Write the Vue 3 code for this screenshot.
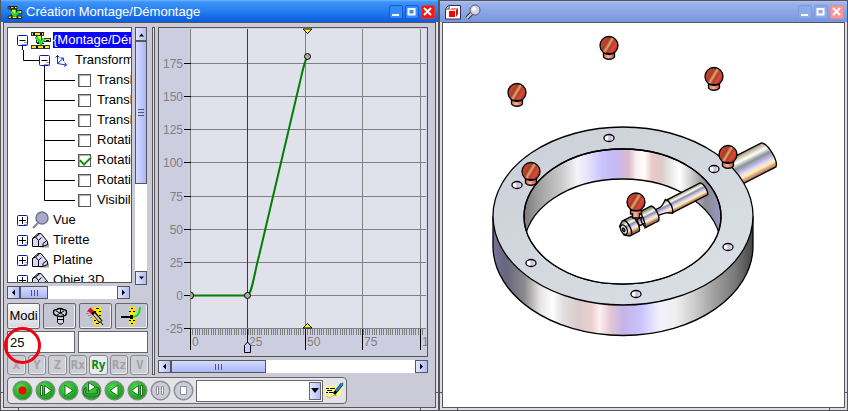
<script setup>
import { ref } from 'vue'

const transforms = ref([
  { label: 'Translation X', on: false },
  { label: 'Translation Y', on: false },
  { label: 'Translation Z', on: false },
  { label: 'Rotation X', on: false },
  { label: 'Rotation Y', on: true },
  { label: 'Rotation Z', on: false },
  { label: 'Visibilité', on: false }
])
const parts = ['Tirette', 'Platine', 'Objet 3D']
const axes = ['X', 'Y', 'Z', 'Rx', 'Ry', 'Rz', 'V']
const frame = ref('25')
const value = ref('')
const choice = ref('')

const levels = [
  { t: '175', y: 63 }, { t: '150', y: 96 }, { t: '125', y: 129 }, { t: '100', y: 162 },
  { t: '75', y: 196 }, { t: '50', y: 229 }, { t: '25', y: 262 }, { t: '0', y: 295 }, { t: '-25', y: 328 }
]
const times = [{ t: '0', x: 190 }, { t: '25', x: 247 }, { t: '50', x: 305 }, { t: '75', x: 362 }, { t: '100', x: 420 }]
let ruler = ''
for (let i = 0; i <= 101; i++) ruler += `M${Math.round(190 + i * 2.3) + 0.5} 328v7`

const controls = [
  { name: 'Enregistrer', kind: 'rec' },
  { name: 'Pas suivant', kind: 'step' },
  { name: 'Lecture', kind: 'play' },
  { name: 'Boucle', kind: 'loop' },
  { name: 'Lecture arrière', kind: 'back' },
  { name: 'Pas précédent', kind: 'stepback' },
  { name: 'Pause', kind: 'pause' },
  { name: 'Stop', kind: 'stop' }
]
const screws = [[609, 45], [517, 92], [714, 76], [728, 154], [531, 171]]
const holes = [[609, 138], [714, 169], [728, 247], [636, 294], [531, 263], [517, 185]]
</script>

<template>
  <main class="desk">
    <section class="win active">
      <header class="bar">
        <svg class="logo" width="16" height="15" viewBox="0 0 20 18">
          <path d="M1.500 1.500h11v3h-11zM5.500 4.500h6v9h-6z" fill="#f0e830" stroke="#000" />
          <path d="M12.500 6.500h6v4h-6zM1.500 13.500h17v3h-17z" fill="#f0e830" stroke="#000" />
          <path d="M4 2v2M9 2v2M6 14v2M13 14v2" stroke="#000" stroke-width="2" />
          <path d="M5 8l5 5 5-6" fill="none" stroke="#1be02a" stroke-width="3" />
        </svg>
        <h1>Création Montage/Démontage</h1>
        <button class="wb" aria-label="Réduire"><svg width="13" height="13"><path d="M3 9h7v2H3z" fill="#fff" /></svg></button>
        <button class="wb" aria-label="Agrandir"><svg width="13" height="13"><path d="M3.500 4H9.500V9.500H3.500z" fill="none" stroke="#fff" stroke-width="2" /></svg></button>
        <button class="wb close" aria-label="Fermer"><svg width="13" height="13"><path d="M3 3l7 7M10 3l-7 7" stroke="#fff" stroke-width="2" /></svg></button>
      </header>
      <div class="body">
        <div class="upper">
          <div class="left">
            <div class="treegrid">
              <div class="tree">
                <div class="row">
                  <svg class="tg" width="11" height="20"><path d="M5.500 16v4" stroke="#000" /><rect x=".5" y="5.500" width="10" height="10" rx="1" fill="#fff" stroke="#0a1aa0" /><path d="M2.500 10.500h6" stroke="#000" /><path d="M5 14.500h5M7 12.500h3" stroke="#8f98dc" /></svg>
                  <svg class="ric" width="20" height="18" viewBox="0 0 20 18" shape-rendering="crispEdges">
                    <path d="M.5 1.500h12v3H.5zM5.500 4.500h5v7h-5z" fill="#f0e830" stroke="#333" />
                    <path d="M13.500 7.500h6v3h-6zM.5 14.500h18v3H.5z" fill="#f0e830" stroke="#333" />
                    <path d="M3 2v2M10 2v2M6 15v2M13 15v2" stroke="#000" stroke-width="2" />
                    <path d="M11 1h2M6 12h7M15 9h3" stroke="#000" />
                    <path d="M5 6l5 6 3-4" fill="none" stroke="#1be02a" stroke-width="3" />
                  </svg>
                  <span class="sel">{Montage/Démontage}</span>
                </div>
                <div class="row lvl1">
                  <svg width="17" height="20"><path d="M1.500 0v10.500H17" fill="none" stroke="#000" /></svg>
                  <svg class="tg" width="11" height="20"><path d="M5.500 16v4" stroke="#000" /><rect x=".5" y="5.500" width="10" height="10" rx="1" fill="#fff" stroke="#0a1aa0" /><path d="M2.500 10.500h6" stroke="#000" /><path d="M5 14.500h5M7 12.500h3" stroke="#8f98dc" /></svg>
                  <svg class="axes" width="13" height="13" fill="none" stroke="#1430d0"><path d="M2.500 9.500V1M.5 3.500l2-2 2 2M2.500 9.500L8 4.500M5.500 4h3v3M2.500 9.500l9 1.500M9.500 8.500l2 2.500-2.500 1.500" /></svg>
                  <span>Transformation</span>
                </div>
                <label v-for="(t, i) in transforms" :key="t.label" class="row lvl2">
                  <svg width="32" height="20"><path :d="i < 6 ? 'M.5 0V20M.5 10.500H31' : 'M.5 0V10.500H31'" fill="none" stroke="#000" /></svg>
                  <input v-model="t.on" type="checkbox"><span>{{ t.label }}</span>
                </label>
                <div class="row">
                  <svg class="tg" width="11" height="20"><rect x=".5" y="5.500" width="10" height="10" rx="1" fill="#fff" stroke="#0a1aa0" /><path d="M2 10.500h7M5.500 7v7" stroke="#000" /><path d="M7 14.500h3M8 12.500h2" stroke="#8f98dc" /></svg>
                  <svg class="ric2" width="19" height="18"><circle cx="11" cy="7" r="6" fill="#a9a9cc" stroke="#74748c" stroke-width="1.500" /><path d="M7 12l-5 5" stroke="#808090" stroke-width="2" /></svg>
                  <span>Vue</span>
                </div>
                <div v-for="p in parts" :key="p" class="row">
                  <svg class="tg" width="11" height="20"><rect x=".5" y="5.500" width="10" height="10" rx="1" fill="#fff" stroke="#0a1aa0" /><path d="M2 10.500h7M5.500 7v7" stroke="#000" /><path d="M7 14.500h3M8 12.500h2" stroke="#8f98dc" /></svg>
                  <svg class="ric2" width="19" height="16"><path d="M9 15.500h9V11z" fill="#a0a0ac" /><path d="M1.500 6.500L7 1.500h3l6.500 8v3l-4.500 2H1.500z" fill="#d8d8f2" stroke="#000" /><path d="M1.500 6.500l3-1.500 3 3.500v6M4.500 5l4-3M7.500 8.500l3-3M12 14v-2.500l4-3" fill="none" stroke="#000" /></svg>
                  <span>{{ p }}</span>
                </div>
              </div>
              <div class="vscroll">
                <button class="sb" aria-label="Haut"><svg width="7" height="5"><path d="M1 4.500l2.500-3 2.500 3z" /></svg></button>
                <div class="vthumb"><svg width="6" height="9"><path d="M0 1.500h6M0 4.500h6M0 7.500h6" stroke="#55557c" /></svg></div>
                <button class="sb" aria-label="Bas"><svg width="7" height="5"><path d="M1 .5l2.500 3L6 .5z" /></svg></button>
              </div>
              <div class="hscroll">
                <button class="sb" aria-label="Gauche"><svg width="5" height="7"><path d="M4 .5L1 3.500l3 3z" /></svg></button>
                <div class="hthumb short"><svg width="9" height="6"><path d="M1.500 0v6M4.500 0v6M7.500 0v6" stroke="#55557c" /></svg></div>
                <span class="track"></span>
                <button class="sb" aria-label="Droite"><svg width="5" height="7"><path d="M1 .5l3 3-3 3z" /></svg></button>
              </div>
            </div>
            <div class="tools">
              <button class="tool modi">Modi</button>
              <button class="tool" aria-label="Visserie"><svg width="16" height="18"><path d="M5.500 9.500h6v6l-1.500 1.500H7l-1.500-1.500z" fill="#d4d4de" stroke="#000" /><path d="M1.500 5.500C1.500 3 3 2.500 5 2.500c1-1.500 5-1.500 6 0 2 0 3.500.5 3.500 3S12 9.500 8.500 9.500 1.500 8 1.500 5.500z" fill="#d4d4de" stroke="#000" stroke-width="1.500" /><path d="M4 4l8 4M12 4L5 8M8.500 2v4M6 12.500h5" stroke="#000" /></svg></button>
              <button class="tool" aria-label="Supprimer la clé"><svg width="24" height="20"><path d="M10 1h7v18h-7z" fill="#f5e800" /><path d="M10 5.500h2M15 5.500h2M10 9.500h2M15 9.500h2M12 2.500h3M12 17.500h3M10 14.500h2" stroke="#000" /><path d="M3 5.500h2M2 7.500h3M4 9.500h3M6 11.500h2" stroke="#888" /><path d="M5 3l5 5" stroke="#d81010" stroke-width="4" /><path d="M9 6l8 10" stroke="#000" stroke-width="4" /><path d="M10 8l7 8" stroke="#c8c8d8" stroke-width="2" /><path d="M16 15l3 4" stroke="#000" /></svg></button>
              <button class="tool" aria-label="Éditer la courbe"><svg width="24" height="20"><path d="M9 1h6v18H9z" fill="#f5e800" /><path d="M9 5.500h2M13 5.500h2M11 2.500h2M11 17.500h2M9 14.500h2M13 14.500h2" stroke="#000" /><path d="M1 11h9" stroke="#000" stroke-width="2" /><path d="M12 11C18 11 20 7 20 1" fill="none" stroke="#10e020" stroke-width="2" /><path d="M10 9h3v4h-3z" fill="#000" /></svg></button>
            </div>
            <div class="fields">
              <div class="field"><input v-model="frame" type="text" aria-label="Image"><span class="mark"></span></div>
              <div class="field"><input v-model="value" type="text" aria-label="Valeur"></div>
            </div>
            <div class="axisrow">
              <button v-for="a in axes" :key="a" :class="['axis', { on: a === 'Ry' }]">{{ a }}</button>
            </div>
          </div>
          <div class="split"></div>
          <div class="graphcol">
            <div class="graph">
              <svg viewBox="159 28 268 327" preserveAspectRatio="xMinYMin meet">
                <path d="M191 29H426V328H191z" fill="#e1e1ec" />
                <g fill="none" stroke="#808080" shape-rendering="crispEdges">
                  <path v-for="l in levels" :key="l.t" :d="`M191 ${l.y + 0.5}H426`" />
                  <path v-for="l in times" :key="l.t" :d="`M${l.x + 0.5} 29V328`" />
                  <path :d="ruler" />
                </g>
                <g stroke="#000" shape-rendering="crispEdges">
                  <path v-for="l in levels" :key="l.t" :d="`M184 ${l.y + 0.5}H191`" />
                  <path v-for="l in times" :key="l.t" :d="`M${l.x + 0.5} 329V350`" />
                  <path d="M247.500 29V328" stroke="#2a2ac8" />
                </g>
                <g class="lab">
                  <text v-for="l in levels" :key="l.t" x="183" :y="l.y + 5" text-anchor="end">{{ l.t }}</text>
                  <text v-for="l in times" :key="l.t" :x="l.x + 2" y="346">{{ l.t }}</text>
                </g>
                <path d="M190 295.500H247C252 295 254 274 259 256L299 86C302 74 303 66 307 57" fill="none" stroke="#008000" stroke-width="2" />
                <path d="M190.500 292q3 0 3 3.500t-3 3.500" fill="#aaa" stroke="#000" />
                <g fill="#aaa" stroke="#000"><circle cx="247.500" cy="295.500" r="3" /><circle cx="307.500" cy="56.500" r="3" /></g>
                <path d="M303 328l4.500-4.500 4.500 4.500z M303 29h9l-4.500 4.500z" fill="#ff0" stroke="#000" />
                <path d="M244.500 352.500v-7l3-3.500 3 3.500v7z" fill="#c6d0fb" stroke="#000" />
              </svg>
            </div>
            <div class="hscroll wide">
              <button class="sb" aria-label="Gauche"><svg width="5" height="7"><path d="M4 .5L1 3.500l3 3z" /></svg></button>
              <div class="hthumb long"><svg width="9" height="6"><path d="M1.500 0v6M4.500 0v6M7.500 0v6" stroke="#55557c" /></svg></div>
              <span class="track"></span>
              <button class="sb" aria-label="Droite"><svg width="5" height="7"><path d="M1 .5l3 3-3 3z" /></svg></button>
            </div>
          </div>
        </div>
        <div class="player">
          <button v-for="c in controls" :key="c.kind" class="pc" :aria-label="c.name">
            <svg width="21" height="21" viewBox="0 0 21 21">
              <defs>
                <radialGradient :id="'pg-' + c.kind" cx=".4" cy=".35" r=".7"><stop offset="0" stop-color="#4fe04f" /><stop offset="1" stop-color="#0a980f" /></radialGradient>
              </defs>
              <template v-if="c.kind === 'pause' || c.kind === 'stop'">
                <circle cx="10.500" cy="10.500" r="9.300" fill="#cdcdd8" stroke="#8d8d9e" stroke-width="1.500" />
                <path v-if="c.kind === 'pause'" d="M6.500 6.500h2v8h-2zM11.500 6.500h2v8h-2z" fill="#fff" stroke="#8d8d9e" />
                <path v-else d="M7.500 6.500h6v8h-6z" fill="#fff" stroke="#8d8d9e" />
              </template>
              <template v-else>
                <circle cx="10.500" cy="10.500" r="9.300" :fill="`url(#pg-${c.kind})`" stroke="#7b8f80" stroke-width="1.500" />
                <circle v-if="c.kind === 'rec'" cx="10.500" cy="10.500" r="4" fill="#f00" />
                <path v-if="c.kind === 'step'" d="M5.500 5.500h2v10h-2zM9.500 5.500l7 5-7 5z" fill="#fff" stroke="#1d6b20" />
                <path v-if="c.kind === 'play'" d="M7 5l8 5.500L7 16z" fill="#fff" stroke="#1d6b20" />
                <template v-if="c.kind === 'loop'"><path d="M6 8.500C2.500 9 3 15 6 15h9c3.500 0 3.500-6.500 0-6.500" fill="none" stroke="#1d6b20" stroke-width="3" /><path d="M6 8.500C2.500 9 3 15 6 15h9c3.500 0 3.500-6.500 0-6.500" fill="none" stroke="#4bd050" /><path d="M7.500 2.500l7 4.500-7 4.500z" fill="#fff" stroke="#1d6b20" /></template>
                <path v-if="c.kind === 'back'" d="M14 5l-8 5.500 8 5.500z" fill="#fff" stroke="#1d6b20" />
                <path v-if="c.kind === 'stepback'" d="M13.500 5.500h2v10h-2zM11.500 5.500l-7 5 7 5z" fill="#fff" stroke="#1d6b20" />
              </template>
            </svg>
          </button>
          <div class="combo">
            <select v-model="choice" aria-label="Séquence"><option value=""></option></select>
            <span class="arrow"><svg width="8" height="5"><path d="M0 0h8L4 5z" /></svg></span>
          </div>
          <button class="note" aria-label="Note">
            <svg width="19" height="17"><path d="M0 4h16v8l-4 2-4-1-3 3-5-2z" fill="#fff88c" /><path d="M1 14l4 2 4-3 3 1" fill="none" stroke="#c8b860" /><path d="M1 6.500h3M5 6.500h5M2 8.500h5M1 10.500h2M4 10.500h4" stroke="#000" /><path d="M9 12l8-10" stroke="#000" stroke-width="3" /><path d="M11 9l7-8" stroke="#1888d8" stroke-width="2" /></svg>
          </button>
        </div>
      </div>
    </section>

    <section class="win idle">
      <header class="bar">
        <svg class="cube" width="16" height="15"><path d="M.5 3.500l3-3h12v13.500H.5z" fill="#fff" stroke="#33334c" /><path d="M4 5l3-2h6l-3 2z" fill="#d88" /><path d="M4 6h6v6H4z" fill="#f00" /><path d="M11 5l2-2v6l-2 3z" fill="#c01818" /><path d="M1 4h3V1" fill="none" stroke="#33334c" /></svg>
        <svg width="17" height="16"><path d="M7 9l-5 5" stroke="#333" stroke-width="4" /><path d="M7 9l-5 5" stroke="#d0d0d8" stroke-width="2" /><circle cx="10" cy="6" r="5" fill="#d0d4e6" stroke="#5a5a70" /><circle cx="9" cy="5" r="2" fill="#fff" /></svg>
        <span class="fill"></span>
        <button class="wb" aria-label="Réduire"><svg width="13" height="13"><path d="M3 9h7v2H3z" fill="#fff" /></svg></button>
        <button class="wb" aria-label="Agrandir"><svg width="13" height="13"><path d="M3.500 4H9.500V9.500H3.500z" fill="none" stroke="#fff" stroke-width="2" /></svg></button>
        <button class="wb close" aria-label="Fermer"><svg width="13" height="13"><path d="M3 3l7 7M10 3l-7 7" stroke="#fff" stroke-width="2" /></svg></button>
      </header>
      <div class="body view">
        <svg viewBox="443 23 401 384" preserveAspectRatio="xMinYMin meet">
          <defs>
            <linearGradient id="outer" gradientUnits="userSpaceOnUse" x1="493" y1="0" x2="753" y2="0">
              <stop offset="0" stop-color="#77739c" /><stop offset=".05" stop-color="#66647c" /><stop offset=".12" stop-color="#8a8a8c" /><stop offset=".18" stop-color="#e4e2e2" /><stop offset=".23" stop-color="#fff" /><stop offset=".27" stop-color="#e0dede" /><stop offset=".33" stop-color="#dccaca" /><stop offset=".38" stop-color="#ecd0d0" /><stop offset=".41" stop-color="#fff0f0" /><stop offset=".45" stop-color="#e4c8d4" /><stop offset=".5" stop-color="#c4b4e8" /><stop offset=".57" stop-color="#cbc4fc" /><stop offset=".64" stop-color="#f3f0fc" /><stop offset=".7" stop-color="#f0f0f0" /><stop offset=".77" stop-color="#cfcfcf" /><stop offset=".85" stop-color="#a0a0a0" /><stop offset=".93" stop-color="#7a7a7a" /><stop offset="1" stop-color="#454545" />
            </linearGradient>
            <linearGradient id="inner" gradientUnits="userSpaceOnUse" x1="524" y1="0" x2="721" y2="0">
              <stop offset="0" stop-color="#7a7a7a" /><stop offset=".08" stop-color="#a2a2a2" /><stop offset=".2" stop-color="#cfcfcf" /><stop offset=".27" stop-color="#f5f4fa" /><stop offset=".33" stop-color="#e4e0fa" /><stop offset=".4" stop-color="#c8c2fc" /><stop offset=".47" stop-color="#c6b8f4" /><stop offset=".53" stop-color="#dcb8cc" /><stop offset=".57" stop-color="#fbeeee" /><stop offset=".61" stop-color="#fff" /><stop offset=".65" stop-color="#ecc8c8" /><stop offset=".7" stop-color="#dccaca" /><stop offset=".74" stop-color="#e6e6e6" /><stop offset=".79" stop-color="#fff" /><stop offset=".86" stop-color="#c4c4c4" /><stop offset=".92" stop-color="#8a8a92" /><stop offset="1" stop-color="#9a96c4" />
            </linearGradient>
            <linearGradient id="face" x1="0" y1="0" x2="1" y2="1"><stop offset="0" stop-color="#cbcfd8" /><stop offset="1" stop-color="#dbe1e5" /></linearGradient>
            <linearGradient id="steel" gradientUnits="userSpaceOnUse" x1="0" y1="-20" x2="0" y2="20">
              <stop offset="0" stop-color="#988f80" /><stop offset=".13" stop-color="#c9c6ac" /><stop offset=".25" stop-color="#fff" /><stop offset=".4" stop-color="#8a9090" /><stop offset=".55" stop-color="#c8bcec" /><stop offset=".66" stop-color="#e8dcf0" /><stop offset=".78" stop-color="#fff0b0" /><stop offset=".9" stop-color="#d8a080" /><stop offset="1" stop-color="#a07058" />
            </linearGradient>
            <linearGradient id="shaft" gradientUnits="userSpaceOnUse" x1="0" y1="-14" x2="0" y2="14">
              <stop offset="0" stop-color="#988f80" /><stop offset=".13" stop-color="#d4d0b4" /><stop offset=".24" stop-color="#fff" /><stop offset=".42" stop-color="#8a9494" /><stop offset=".56" stop-color="#b8b0dc" /><stop offset=".68" stop-color="#e4dcf4" /><stop offset=".8" stop-color="#fff0b0" /><stop offset=".9" stop-color="#d8a080" /><stop offset="1" stop-color="#a07058" />
            </linearGradient>
            <linearGradient id="red" x1="0" y1=".1" x2="1" y2=".7"><stop offset="0" stop-color="#c03828" /><stop offset=".25" stop-color="#c84030" /><stop offset=".4" stop-color="#9a4428" /><stop offset=".52" stop-color="#f0a070" /><stop offset=".62" stop-color="#a84430" /><stop offset=".78" stop-color="#e04838" /><stop offset="1" stop-color="#903020" /></linearGradient>
            <linearGradient id="stem"><stop offset="0" stop-color="#d86848" /><stop offset=".45" stop-color="#f0b898" /><stop offset="1" stop-color="#c84838" /></linearGradient>
            <linearGradient id="pin"><stop offset="0" stop-color="#fff" /><stop offset=".35" stop-color="#fff" /><stop offset=".5" stop-color="#dcb8d8" /><stop offset=".7" stop-color="#c8c0f8" /><stop offset="1" stop-color="#fff" /></linearGradient>
            <clipPath id="bore"><ellipse cx="622.500" cy="216.500" rx="98.500" ry="67.500" /></clipPath>
          </defs>
          <g stroke="#000" stroke-width="1.300">
            <path transform="translate(741 169) rotate(-27)" d="M-10-14H30C36-10 37 10 32 14H-10z" fill="url(#shaft)" />
            <path d="M493 217v29C493 295 551 335.500 623 335.500S753 295 753 246v-29z" fill="url(#outer)" />
            <ellipse cx="623" cy="216" rx="130" ry="89" fill="url(#face)" />
            <ellipse cx="622.500" cy="216.500" rx="98.500" ry="67.500" fill="url(#inner)" />
            <g clip-path="url(#bore)"><ellipse cx="622.500" cy="246.500" rx="98.500" ry="67.500" fill="#fff" /></g>
            <ellipse cx="622.500" cy="216.500" rx="98.500" ry="67.500" fill="none" />
            <ellipse v-for="h in holes" :key="h[0] + '-' + h[1]" :cx="h[0]" :cy="h[1]" rx="5" ry="3.500" fill="url(#pin)" />
          </g>
          <g transform="translate(480 120) scale(.3333)" stroke="#000" stroke-width="4">
            <g transform="translate(500 293) rotate(-27)">
              <path d="M80-20H190C200-14 201 15 194 22H77z" fill="url(#steel)" />
              <path d="M27-9H50C60-9 66-18 75-23C86-10 85 12 75 24C66 16 58 10 27 10z" fill="url(#steel)" />
              <path d="M-30-8H-8V12H-30z" fill="url(#steel)" />
              <path d="M-12-25H28C38-16 38 14 28 25H-18C-9 12-8-12-12-25z" fill="url(#steel)" />
              <path d="M-14-7C-21-4-21 17-16 25" fill="none" />
              <path d="M-70-24H-38C-29-14-29 17-38 26H-70L-84 16V-14z" fill="url(#steel)" />
              <path d="M-64-24C-55-13-55 15-64 26" fill="none" />
              <ellipse cx="-77" cy="1" rx="9" ry="15" fill="#e2e2da" /><ellipse cx="-78" cy="1" rx="3" ry="6" fill="#8a9090" />
            </g>
          </g>
          <g stroke="#000" stroke-width="1.300">
            <g v-for="s in screws" :key="s[0] + '/' + s[1]" :transform="`translate(${s[0]} ${s[1]})`">
              <path d="M-5.500 6v6c2 3 9 3 11 0V6z" fill="url(#stem)" /><circle cy=".5" r="9" fill="url(#red)" /><path d="M-5.500 8.500H5.500" />
            </g>
            <g transform="translate(636 202)"><path d="M-5.500 6v6h2v4h7v-4h2V6z" fill="url(#stem)" /><circle r="9" fill="url(#red)" /><path d="M-5.500 8.500H5.500" /></g>
          </g>
        </svg>
      </div>
    </section>
  </main>
</template>

<style>
html, body { margin: 0; }
</style>

<style scoped>
* { box-sizing: border-box; }
.desk {
  display: grid;
  grid-template-columns: 439fr 409fr;
  height: 100vh;
  font: 13px/20px "Liberation Sans", Arial, sans-serif;
  color: #000;
  background: #5a5a5e;
}
svg { display: block; flex: none; }
button { padding: 0; margin: 0; font: inherit; }
.win {
  display: flex;
  flex-direction: column;
  min-width: 0;
  min-height: 0;
  border: 1px solid #55555a;
  border-top: 0;
  padding: 0 2px 2px;
  background:
    linear-gradient(#55555a, #55555a) 0 calc(100% - 17px) / 100% 1px no-repeat,
    linear-gradient(#55555a, #55555a) 17px 100% / 1px 3px no-repeat,
    linear-gradient(#55555a, #55555a) calc(100% - 17px) 100% / 1px 3px no-repeat,
    #dedde6;
}
.bar {
  display: flex;
  align-items: center;
  flex: none;
  height: 22px;
  margin: 0 -2px;
  padding: 2px 3px 0 6px;
  gap: 2px;
}
.active .bar { background: linear-gradient(#6cb4ff 0, #3b94fa 2px, #2a80f0 10px, #0a5be0); }
.idle .bar { background: linear-gradient(#55555a 0, #55555a 1px, #b4c4f4 1px, #9cb4ea 3px, #7895de); padding-left: 5px; }
.bar h1 {
  flex: 1;
  min-width: 0;
  margin: 0 0 0 1px;
  overflow: hidden;
  white-space: nowrap;
  font: 13px/20px "Liberation Sans", Arial, sans-serif;
  color: #fff;
}
.fill { flex: 1; }
.cube { margin-right: 2px; }
.wb {
  flex: none;
  width: 14px;
  height: 14px;
  border: 1px solid #1a56d8;
  border-radius: 2px;
  background: #2f8cf8;
  overflow: hidden;
}
.wb svg { margin: -1px 0 0 -1px; }
.wb.close { border-color: #e03a30; background: #f01818; }
.idle .wb { border-color: #7d98e0; background: #8eaaec; }
.idle .wb.close { border-color: #d88c9c; background: #ff9494; }
.body {
  display: flex;
  flex-direction: column;
  flex: 1;
  min-height: 0;
  border: 1px solid #55555a;
  background: #cbcad7;
  padding: 4px 7px 3px 3px;
  gap: 2px;
}
.view { padding: 0; background: #fff; }
.view svg { width: 100%; height: 100%; }
.upper { display: flex; flex: 1; min-height: 0; gap: 3px; }
.left { display: flex; flex-direction: column; width: 142px; flex: none; gap: 2px; }
.treegrid {
  display: grid;
  grid-template-columns: 125px 12px;
  grid-template-rows: minmax(0, 1fr) 13px;
  gap: 3px;
  flex: 1;
  min-height: 0;
  margin-bottom: 2px;
}
.tree {
  border: 1px solid #55555a;
  background: #fff;
  overflow: hidden;
  padding: 2px 0 0 9px;
  white-space: nowrap;
}
.row { display: flex; align-items: center; height: 20px; }
.tg { margin-right: 3px; }
.ric { margin-right: 2px; }
.ric2 { margin-right: 3px; }
.sel { height: 16px; line-height: 16px; background: #0a00ff; color: #fff; }
.lvl1 { padding-left: 5px; }
.lvl1 .axes { margin: 0 7px 0 2px; }
.lvl2 { padding-left: 27px; }
.lvl2 input {
  appearance: none;
  flex: none;
  width: 13px;
  height: 13px;
  margin: 0 6px 0 2px;
  border: 1px solid #55555a;
  background: #fff;
  box-shadow: inset 1px 1px 1px #aaa;
}
.lvl2 input:checked::after {
  content: "";
  display: block;
  width: 9px;
  height: 5px;
  margin: 1px 0 0 1px;
  border: solid #109010;
  border-width: 0 0 2px 2px;
  transform: rotate(-45deg);
}
.vscroll { display: flex; flex-direction: column; background: #fff; margin-bottom: -2px; }
.sb {
  display: flex;
  align-items: center;
  justify-content: center;
  flex: none;
  width: 13px;
  height: 13px;
  border: 1px solid #55555a;
  background: linear-gradient(90deg, #e4e8ff, #b2bcf8);
}
.vscroll .sb { width: 12px; height: 14px; }
.vthumb {
  display: flex;
  align-items: center;
  justify-content: center;
  height: 143px;
  border: 1px solid #55555a;
  background: linear-gradient(90deg, #d6dcff, #a9b6fa);
}
.vscroll .sb:last-child { margin-top: auto; }
.hscroll { display: flex; background: #fff; width: 123px; height: 13px; }
.hscroll.wide { width: 100%; flex: none; }
.hthumb {
  display: flex;
  align-items: center;
  justify-content: center;
  border: 1px solid #55555a;
  background: linear-gradient(#d6dcff, #a9b6fa);
}
.short { width: 28px; }
.long { width: 35%; }
.track { flex: 1; }
.tools { display: grid; grid-template-columns: repeat(4, 33px); gap: 3px; height: 26px; flex: none; }
.tool {
  display: flex;
  align-items: center;
  justify-content: center;
  border: 1px solid #66666c;
  border-radius: 2px;
  background: #c6c6d2;
  box-shadow: inset -1px -1px #eeeef4;
  overflow: hidden;
}
.modi { background: linear-gradient(#fafafa, #d8d8e0); }
.fields { display: grid; grid-template-columns: 68px 70px; gap: 3px; height: 22px; flex: none; }
.field { position: relative; }
.field input {
  display: block;
  width: 100%;
  height: 22px;
  padding: 0 2px;
  border: 1px solid #66666c;
  background: #fff;
  font: 13px/20px "Liberation Sans", Arial, sans-serif;
}
.mark {
  position: absolute;
  left: -3px;
  top: -4px;
  width: 37px;
  height: 37px;
  border: 3px solid #f00010;
  border-radius: 50%;
  pointer-events: none;
}
.axisrow { display: flex; gap: 2px; height: 20px; flex: none; }
.axis {
  flex: 1 1 0;
  min-width: 0;
  border: 1px solid #88888e;
  border-radius: 3px;
  background: #cdcdd6;
  box-shadow: inset -1px -1px #e8e8ee;
  color: #a2a2a8;
  font: bold 12px/18px "DejaVu Sans Mono", monospace;
}
.axis.on { background: #ececf0; color: #0a8a14; }
.split { width: 3px; flex: none; border: 1px solid #55555a; background: #e4e4ea; }
.graphcol { display: flex; flex-direction: column; flex: 1; min-width: 0; gap: 3px; padding-bottom: 2px; }
.graph { flex: 1; min-height: 0; border: 1px solid #55555a; background: #cdcde0; overflow: hidden; }
.graph svg { width: 100%; height: 100%; }
.lab { font: 12px "Liberation Sans", Arial, sans-serif; fill: #808080; }
.player {
  display: flex;
  align-items: center;
  align-self: flex-start;
  flex: none;
  height: 27px;
  gap: 2px;
  padding: 0 2px 0 4px;
  border: 1px solid #66666c;
  border-radius: 4px;
  background: #e4e3e6;
}
.pc, .note { border: 0; background: none; }
.combo { position: relative; display: flex; width: 127px; height: 22px; }
.combo select { appearance: none; width: 100%; height: 22px; border: 1px solid #66666c; border-radius: 0; background: #fff; }
.arrow {
  position: absolute;
  right: 2px;
  top: 2px;
  display: flex;
  align-items: center;
  justify-content: center;
  width: 12px;
  height: 18px;
  border: 1px solid #66666c;
  background: linear-gradient(90deg, #e4e8ff, #b2bcf8);
  pointer-events: none;
}
</style>
